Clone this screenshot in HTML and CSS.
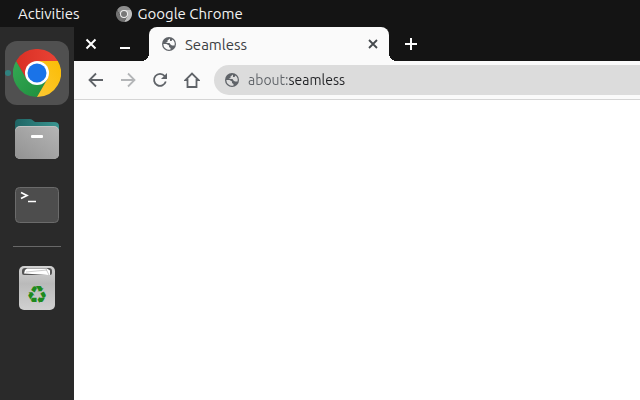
FILE: index.html
```html
<!DOCTYPE html>
<html lang="en">
<head>
    <meta charset="utf-8">
    <link rel="stylesheet" href="styles.css">
    <title>Seamless</title>
</head>
<body>
    <!--TOP BAR-->
    <header class="top-bar">
        <button class="top-button">Activities</button>
        <button class="top-button">
            <svg width="16" height="16" viewBox="0 0 48 48">
                <path fill="#8c8c8c" d="M3.2 12A24 24 0 0 1 44.8 12H24L13.6 30Z"/>
                <path fill="#bdbdbd" d="M44.8 12A24 24 0 0 1 24 48L34.4 30 24 12Z"/>
                <path fill="#707070" d="M24 48A24 24 0 0 1 3.2 12L13.6 30H34.4Z"/>
                <circle cx="24" cy="24" r="12" fill="#f0f0f0"/>
                <circle cx="24" cy="24" r="9" fill="#777"/>
            </svg>
            Google Chrome
        </button>
    </header>

    <div class="desktop">
        <!--DOCK-->
        <nav class="dock">
            <button class="dock-item active" aria-label="Google Chrome">
                <svg width="48" height="48" viewBox="0 0 48 48">
                    <defs>
                        <linearGradient id="red" x1="0" y1="0" x2="1" y2="0">
                            <stop offset="0" stop-color="#d93025"/>
                            <stop offset="1" stop-color="#ea4335"/>
                        </linearGradient>
                        <linearGradient id="yellow" x1="0" y1="1" x2="1" y2="0">
                            <stop offset="0" stop-color="#fcc934"/>
                            <stop offset="1" stop-color="#fbbc04"/>
                        </linearGradient>
                        <linearGradient id="green" x1="1" y1="1" x2="0" y2="0">
                            <stop offset="0" stop-color="#1e8e3e"/>
                            <stop offset="1" stop-color="#34a853"/>
                        </linearGradient>
                    </defs>
                    <path fill="url(#green)" d="M24 48A24 24 0 0 1 3.2 12L13.6 30H34.4Z"/>
                    <path fill="url(#yellow)" d="M44.8 12A24 24 0 0 1 24 48L34.4 30 24 12Z"/>
                    <path fill="url(#red)" d="M3.2 12A24 24 0 0 1 44.8 12H24L13.6 30Z"/>
                    <circle cx="24" cy="24" r="12" fill="#fff"/>
                    <circle cx="24" cy="24" r="9.5" fill="#1a73e8"/>
                </svg>
            </button>
            <button class="dock-item" aria-label="Files">
                <svg width="48" height="48" viewBox="0 0 48 48">
                    <defs>
                        <linearGradient id="folder-back" x1="0" y1="0" x2="1" y2="0">
                            <stop offset="0" stop-color="#1f6464"/>
                            <stop offset="1" stop-color="#3a9691"/>
                        </linearGradient>
                        <linearGradient id="folder-front" x1="0" y1="1" x2="1" y2="0">
                            <stop offset="0" stop-color="#929292"/>
                            <stop offset="1" stop-color="#b5b5b5"/>
                        </linearGradient>
                    </defs>
                    <path fill="url(#folder-back)" d="M2 8Q2 4 6 4H17Q19 4 20 5.500L22 7H41Q46 7 46 11V20H2Z"/>
                    <rect x="2" y="11" width="44" height="33" rx="5" fill="#c4c4c4"/>
                    <rect x="2" y="12" width="44" height="32" rx="5" fill="url(#folder-front)"/>
                    <rect x="18" y="20" width="12" height="3" rx="1" fill="#fff"/>
                </svg>
            </button>
            <button class="dock-item" aria-label="Terminal">
                <svg width="48" height="48" viewBox="0 0 48 48">
                    <rect x="2.500" y="6.500" width="43" height="35" rx="4" fill="#4d4d4d" stroke="#6b6b6b"/>
                    <path fill="none" stroke="#fff" stroke-width="1.700" d="M8 11.500L14 14.500 8 17.500M15 20.500H23"/>
                </svg>
            </button>
            <hr class="dock-line">
            <button class="dock-item" aria-label="Trash">
                <svg width="48" height="48" viewBox="0 0 48 48">
                    <defs>
                        <linearGradient id="bin" x1="0" y1="0" x2="0" y2="1">
                            <stop offset="0" stop-color="#d2d2d2"/>
                            <stop offset=".4" stop-color="#bababa"/>
                            <stop offset="1" stop-color="#d0d0d0"/>
                        </linearGradient>
                    </defs>
                    <rect x="6" y="2" width="36" height="44" rx="5" fill="url(#bin)"/>
                    <path fill="#555" d="M9 7Q9 4 12 4H36Q39 4 39 7V9Q39 11 37 11H11Q9 11 9 9Z"/>
                    <path fill="#fff" d="M12 6L14 4.500H34L37 6.500V11H35L11 9.500Z"/>
                    <path fill="none" stroke="#aaa" stroke-width=".6" d="M13 8L34 6M33 5L36 11"/>
                    <text class="recycle" x="24" y="39" text-anchor="middle">♻</text>
                </svg>
            </button>
        </nav>

        <!--BROWSER WINDOW-->
        <main class="browser">
            <div class="tab-strip">
                <button class="window-button" aria-label="Close window">
                    <svg width="16" height="16" viewBox="0 0 16 16"><path class="light-line" d="M3.500 3.500L12.500 12.500M12.500 3.500L3.500 12.500"/></svg>
                </button>
                <button class="window-button" aria-label="Minimize">
                    <svg width="16" height="16" viewBox="0 0 16 16"><path class="light-line" d="M3 12H13"/></svg>
                </button>
                <div class="tab">
                    <svg width="16" height="16" viewBox="0 0 16 16">
                        <circle cx="8" cy="8" r="7" fill="#5f6368"/>
                        <path fill="#fafafa" d="M9 2.400L6.500 4.500V6L4.500 7H8.500L9.500 8.500 11 9.500H13.500A5.700 5.700 0 0 0 11.500 3.500L10.500 5H9ZM2.300 8H5.500L8 9.500V11L9.500 12V13.500A5.700 5.700 0 0 1 2.300 8Z"/>
                    </svg>
                    <span class="tab-title">Seamless</span>
                    <button class="tab-close" aria-label="Close tab">
                        <svg width="16" height="16" viewBox="0 0 16 16"><path class="dark-line" d="M4 4L12 12M12 4L4 12"/></svg>
                    </button>
                </div>
                <button class="new-tab" aria-label="New tab">
                    <svg width="16" height="16" viewBox="0 0 16 16"><path class="light-line" d="M8 2V14M2 8H14"/></svg>
                </button>
            </div>

            <div class="toolbar">
                <button class="nav-button" aria-label="Back">
                    <svg width="16" height="16" viewBox="0 0 16 16"><path class="dark-line" d="M15 8H2M8 1.500L1.500 8 8 14.500"/></svg>
                </button>
                <button class="nav-button" aria-label="Forward" disabled>
                    <svg width="16" height="16" viewBox="0 0 16 16"><path class="dark-line" d="M1 8H14M8 1.500L14.500 8 8 14.500"/></svg>
                </button>
                <button class="nav-button" aria-label="Reload">
                    <svg width="16" height="16" viewBox="0 0 16 16">
                        <path class="dark-line" d="M12.700 4A6 6 0 1 0 13.800 9.500"/>
                        <path fill="#5f6368" d="M15 1V7H9Z"/>
                    </svg>
                </button>
                <button class="nav-button" aria-label="Home">
                    <svg width="16" height="16" viewBox="0 0 16 16"><path class="dark-line" d="M1.500 8H3.500V15H12.500V8H14.500L8 1.500Z"/></svg>
                </button>
                <div class="address">
                    <svg width="16" height="16" viewBox="0 0 16 16">
                        <circle cx="8" cy="8" r="7" fill="#5f6368"/>
                        <path fill="#dcdcdc" d="M9 2.400L6.500 4.500V6L4.500 7H8.500L9.500 8.500 11 9.500H13.500A5.700 5.700 0 0 0 11.500 3.500L10.500 5H9ZM2.300 8H5.500L8 9.500V11L9.500 12V13.500A5.700 5.700 0 0 1 2.300 8Z"/>
                    </svg>
                    <input class="address-input" type="text" aria-label="Address" value="about:seamless" spellcheck="false">
                </div>
            </div>
            <div class="page"></div>
        </main>
    </div>
</body>
</html>
```

FILE: styles.css
```css
*{
    box-sizing: border-box;
}
body{
    margin: 0;
    min-height: 100vh;
    display: flex;
    flex-direction: column;
    font-family: Ubuntu, "Noto Sans", sans-serif;
    font-size: 15px;
    background-color: #141414;
}
button{
    display: flex;
    align-items: center;
    justify-content: center;
    padding: 0;
    border: none;
    background: none;
    font: inherit;
    cursor: pointer;
}
svg{
    display: block;
    flex-shrink: 0;
}
.top-bar{
    display: flex;
    align-items: center;
    gap: 36px;
    height: 27px;
    padding-left: 18px;
}
.top-button{
    gap: 6px;
    color: #f2f2f2;
}
.desktop{
    display: flex;
    flex: 1;
}

/* dock */
.dock{
    display: flex;
    flex-direction: column;
    align-items: center;
    gap: 2px;
    width: 74px;
    padding-top: 14px;
    background-color: #2a2a2a;
}
.dock-item{
    position: relative;
    width: 64px;
    height: 64px;
    border-radius: 12px;
}
.dock-item.active{
    background-color: #505050;
}
/* running dot */
.dock-item.active::before{
    content: "";
    position: absolute;
    left: 0;
    width: 6px;
    height: 6px;
    border-radius: 50%;
    background-color: #308280;
}
.dock-line{
    width: 48px;
    height: 1px;
    margin: 7px 0;
    border: none;
    background-color: #686868;
}
.recycle{
    font-family: "DejaVu Sans", sans-serif;
    font-size: 24px;
    fill: #1d8a1d;
}

/* browser */
.browser{
    display: flex;
    flex-direction: column;
    flex: 1;
    min-width: 0;
}
.tab-strip{
    display: flex;
    height: 34px;
}
.window-button{
    width: 34px;
}
.light-line{
    fill: none;
    stroke: #fff;
    stroke-width: 2;
}
.dark-line{
    fill: none;
    stroke: #5f6368;
    stroke-width: 1.8;
}
.tab{
    position: relative;
    display: flex;
    align-items: center;
    gap: 8px;
    width: 240px;
    margin-left: 7px;
    padding: 0 8px 0 12px;
    border-radius: 8px 8px 0 0;
    background-color: #fafafa;
    color: #3c4043;
}
/* curved feet of the tab */
.tab::before,
.tab::after{
    content: "";
    position: absolute;
    bottom: 0;
    width: 8px;
    height: 8px;
}
.tab::before{
    right: 100%;
    background: radial-gradient(circle at 0 0, transparent 8px, #fafafa 8px);
}
.tab::after{
    left: 100%;
    background: radial-gradient(circle at 100% 0, transparent 8px, #fafafa 8px);
}
.tab-title{
    flex: 1;
}
.tab-close .dark-line{
    stroke: #45494d;
}
.new-tab{
    width: 28px;
    margin-left: 8px;
}
.toolbar{
    display: flex;
    align-items: center;
    height: 39px;
    padding-left: 6px;
    border-bottom: 1px solid #d5d5d5;
    background-color: #fafafa;
}
.nav-button{
    width: 32px;
    height: 32px;
}
.nav-button:disabled{
    opacity: .45;
}
.address{
    display: flex;
    align-items: center;
    flex: 1;
    gap: 8px;
    height: 30px;
    margin-left: 6px;
    padding-left: 10px;
    border-radius: 15px 0 0 15px;
    background-color: #dcdcdc;
}
.address-input{
    flex: 1;
    min-width: 0;
    padding: 0;
    border: none;
    outline: none;
    font: inherit;
    font-size: 14px;
    /* scheme is grey, the rest is dark */
    color: transparent;
    background: linear-gradient(to right, #5f6368 40px, #202124 40px);
    background-clip: text;
}
.page{
    flex: 1;
    background-color: #fff;
}
```
